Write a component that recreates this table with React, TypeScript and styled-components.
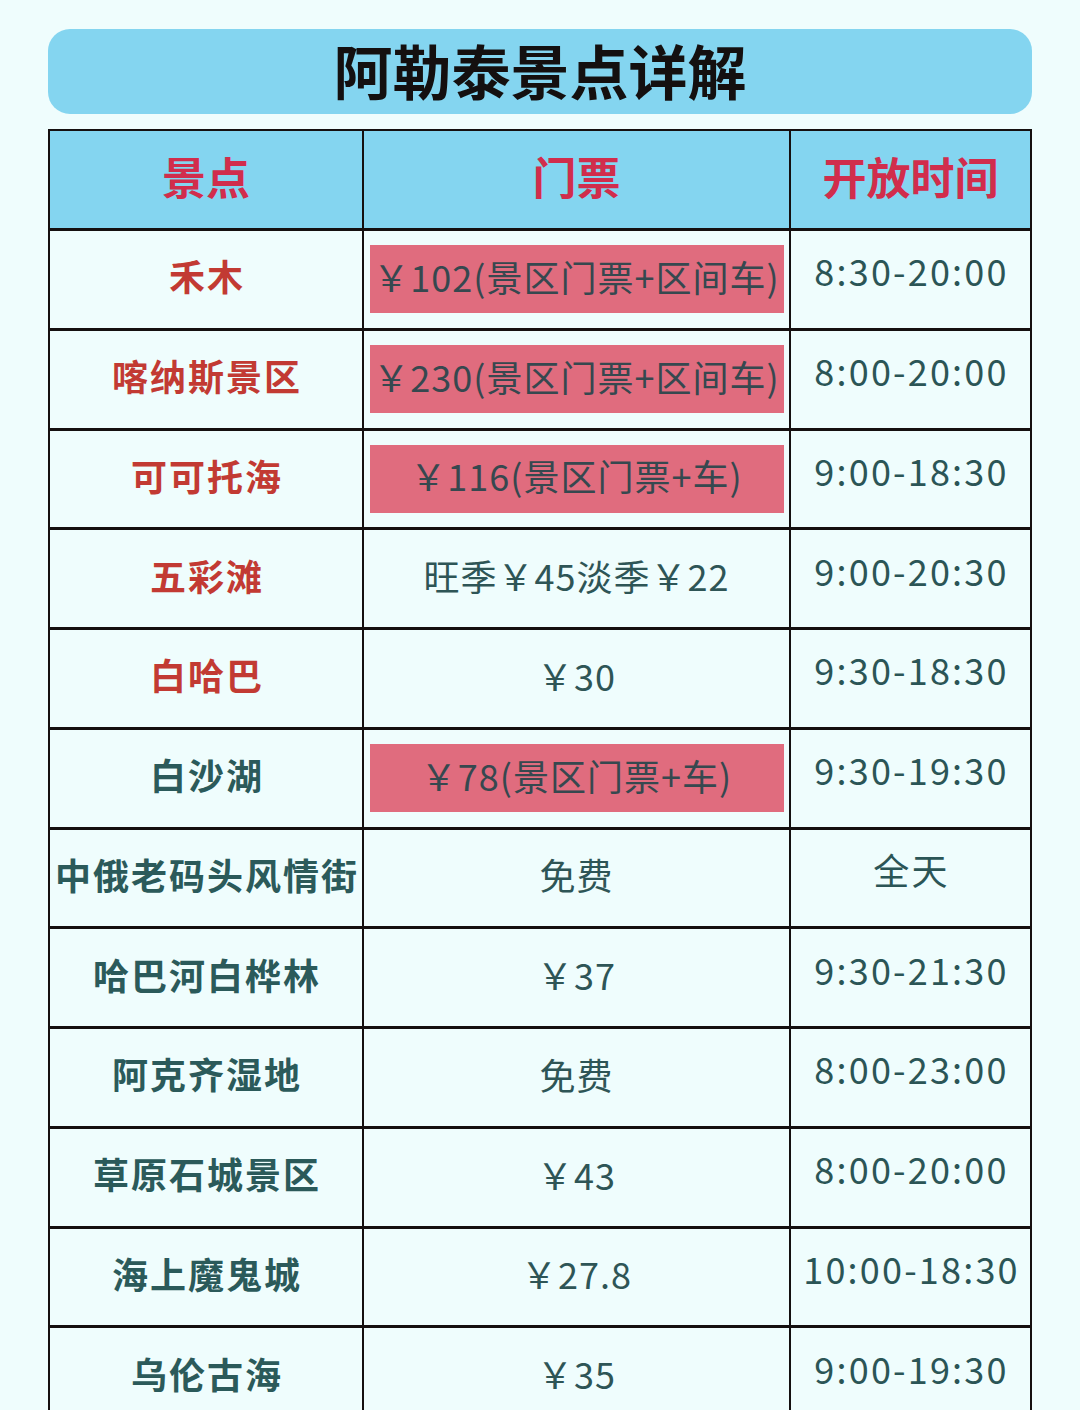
import React from "react";
import styled, { createGlobalStyle } from "styled-components";

const Global = createGlobalStyle`
  html, body {
    margin: 0;
    padding: 0;
    background: #effdfd;
  }
  body {
    font-family: "Noto Sans CJK SC", "Noto Sans", sans-serif;
  }
`;

const Page = styled.div`
  width: 1080px;
  height: 1410px;
  overflow: hidden;
  box-sizing: border-box;
  padding: 29px 48px 0 48px;
  background: #effdfd;
  display: flex;
  flex-direction: column;
  gap: 15px;
`;

const Banner = styled.div`
  flex-shrink: 0;
  height: 85px;
  border-radius: 22px;
  background: #84d5f0;
  display: flex;
  align-items: center;
  justify-content: center;
`;

const Title = styled.h1`
  margin: -5px 0 0 0;
  font-size: 59px;
  font-weight: 700;
  color: #141010;
  line-height: 1;
`;

const Grid = styled.div`
  flex-shrink: 0;
  display: grid;
  grid-template-columns: 312px 425px 239px;
  grid-template-rows: 97px;
  grid-auto-rows: 96.75px;
  column-gap: 2px;
  row-gap: 3px;
  padding: 2px 2px 0 2px;
  background: #151010;
`;

const Cell = styled.div<{ $head?: boolean }>`
  background: ${(p) => (p.$head ? "#84d5f0" : "#effdfd")};
  display: flex;
  align-items: center;
  justify-content: center;
  min-width: 0;
`;

const HeadText = styled.span`
  font-size: 44px;
  font-weight: 700;
  color: #d12d4c;
  line-height: 1;
  margin-top: -8px;
`;

const Name = styled.span<{ $red?: boolean }>`
  font-size: 36px;
  font-weight: 700;
  letter-spacing: 2px;
  margin: -8px -2px 0 0;
  color: ${(p) => (p.$red ? "#c23a33" : "#2b5a5a")};
  line-height: 1;
  white-space: nowrap;
`;

const PriceBox = styled.div<{ $hl?: boolean }>`
  width: 414px;
  height: 68px;
  background: ${(p) => (p.$hl ? "#e06c7e" : "transparent")};
  display: flex;
  align-items: center;
  justify-content: center;
`;

const Price = styled.span<{ $hl?: boolean }>`
  font-size: 36px;
  font-weight: 400;
  letter-spacing: 1px;
  margin-top: -7px;
  color: ${(p) => (p.$hl ? "#36484f" : "#2e5556")};
  line-height: 1;
  white-space: nowrap;
`;

const Time = styled.span`
  font-size: 36px;
  font-weight: 400;
  letter-spacing: 2.2px;
  margin: -18px -2px 0 0;
  color: #2b5556;
  line-height: 1;
  white-space: nowrap;
`;

type Row = { name: string; red?: boolean; price: string; hl?: boolean; time: string };

const rows: Row[] = [
  { name: "禾木", red: true, price: "￥102(景区门票+区间车)", hl: true, time: "8:30-20:00" },
  { name: "喀纳斯景区", red: true, price: "￥230(景区门票+区间车)", hl: true, time: "8:00-20:00" },
  { name: "可可托海", red: true, price: "￥116(景区门票+车)", hl: true, time: "9:00-18:30" },
  { name: "五彩滩", red: true, price: "旺季￥45淡季￥22", time: "9:00-20:30" },
  { name: "白哈巴", red: true, price: "￥30", time: "9:30-18:30" },
  { name: "白沙湖", price: "￥78(景区门票+车)", hl: true, time: "9:30-19:30" },
  { name: "中俄老码头风情街", price: "免费", time: "全天" },
  { name: "哈巴河白桦林", price: "￥37", time: "9:30-21:30" },
  { name: "阿克齐湿地", price: "免费", time: "8:00-23:00" },
  { name: "草原石城景区", price: "￥43", time: "8:00-20:00" },
  { name: "海上魔鬼城", price: "￥27.8", time: "10:00-18:30" },
  { name: "乌伦古海", price: "￥35", time: "9:00-19:30" },
];

export default function App() {
  return (
    <>
      <Global />
      <Page>
        <Banner>
          <Title>阿勒泰景点详解</Title>
        </Banner>
        <Grid>
          <Cell $head>
            <HeadText>景点</HeadText>
          </Cell>
          <Cell $head>
            <HeadText>门票</HeadText>
          </Cell>
          <Cell $head>
            <HeadText>开放时间</HeadText>
          </Cell>
          {rows.map((r) => (
            <React.Fragment key={r.name}>
              <Cell>
                <Name $red={r.red}>{r.name}</Name>
              </Cell>
              <Cell>
                <PriceBox $hl={r.hl}>
                  <Price $hl={r.hl}>{r.price}</Price>
                </PriceBox>
              </Cell>
              <Cell>
                <Time>{r.time}</Time>
              </Cell>
            </React.Fragment>
          ))}
        </Grid>
      </Page>
    </>
  );
}
